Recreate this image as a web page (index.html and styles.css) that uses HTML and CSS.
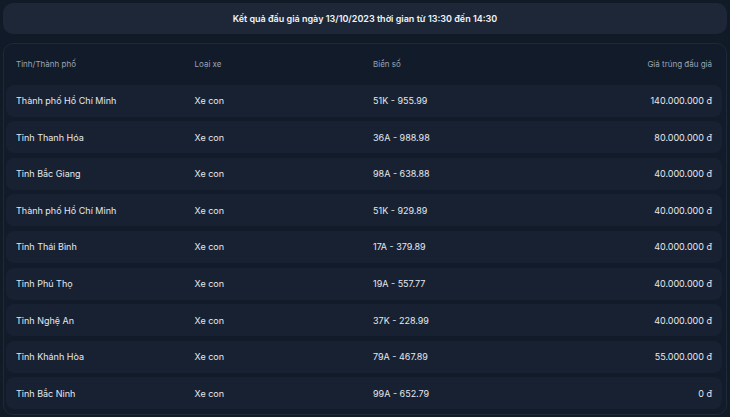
FILE: index.html
```html
<!DOCTYPE html>
<html lang="vi">
<head>
<meta charset="utf-8">
<link rel="stylesheet" href="styles.css">
</head>
<body>
<div class="page">
  <div class="title">Kết quả đấu giá ngày 13/10/2023 thời gian từ 13:30 đến 14:30</div>
  <div class="table">
    <div class="row head">
      <div>Tỉnh/Thành phố</div><div>Loại xe</div><div>Biển số</div><div class="r">Giá trúng đấu giá</div>
    </div>
    <div class="row item"><div>Thành phố Hồ Chí Minh</div><div>Xe con</div><div>51K - 955.99</div><div class="r">140.000.000 đ</div></div>
    <div class="row item"><div>Tỉnh Thanh Hóa</div><div>Xe con</div><div>36A - 988.98</div><div class="r">80.000.000 đ</div></div>
    <div class="row item"><div>Tỉnh Bắc Giang</div><div>Xe con</div><div>98A - 638.88</div><div class="r">40.000.000 đ</div></div>
    <div class="row item"><div>Thành phố Hồ Chí Minh</div><div>Xe con</div><div>51K - 929.89</div><div class="r">40.000.000 đ</div></div>
    <div class="row item"><div>Tỉnh Thái Bình</div><div>Xe con</div><div>17A - 379.89</div><div class="r">40.000.000 đ</div></div>
    <div class="row item"><div>Tỉnh Phú Thọ</div><div>Xe con</div><div>19A - 557.77</div><div class="r">40.000.000 đ</div></div>
    <div class="row item"><div>Tỉnh Nghệ An</div><div>Xe con</div><div>37K - 228.99</div><div class="r">40.000.000 đ</div></div>
    <div class="row item"><div>Tỉnh Khánh Hòa</div><div>Xe con</div><div>79A - 467.89</div><div class="r">55.000.000 đ</div></div>
    <div class="row item"><div>Tỉnh Bắc Ninh</div><div>Xe con</div><div>99A - 652.79</div><div class="r">0 đ</div></div>
  </div>
</div>
</body>
</html>
```

FILE: styles.css
```css
html, body {
  margin: 0;
  padding: 0;
  background: #111a27;
  font-family: Inter, "Noto Sans", sans-serif;
  height: 100%;
  overflow: hidden;
}
.page {
  padding: 3px 3px;
  display: flex;
  flex-direction: column;
  gap: 9px;
}
.title {
  height: 31px;
  background: #1d2737;
  border-radius: 10px;
  color: #f1f5f9;
  font-size: 9px;
  font-weight: 600;
  display: flex;
  align-items: center;
  justify-content: center;
}
.table {
  border: 1px solid #1d2838;
  border-radius: 10px;
  background: #111b29;
  padding: 0 4px 5px 2px;
  display: flex;
  flex-direction: column;
  gap: 4.6px;
}
.row {
  display: grid;
  grid-template-columns: 178.5px 178.5px 1fr 1fr;
  align-items: center;
  padding: 0 10px;
}
.head {
  height: 32px;
  padding-top: 4px;
  color: #9aa5b6;
  font-size: 8px;
}
.item {
  height: 32px;
  background: #172132;
  border-radius: 8px;
  color: #e6e9ee;
  font-size: 9px;
}
.r {
  text-align: right;
}
```
